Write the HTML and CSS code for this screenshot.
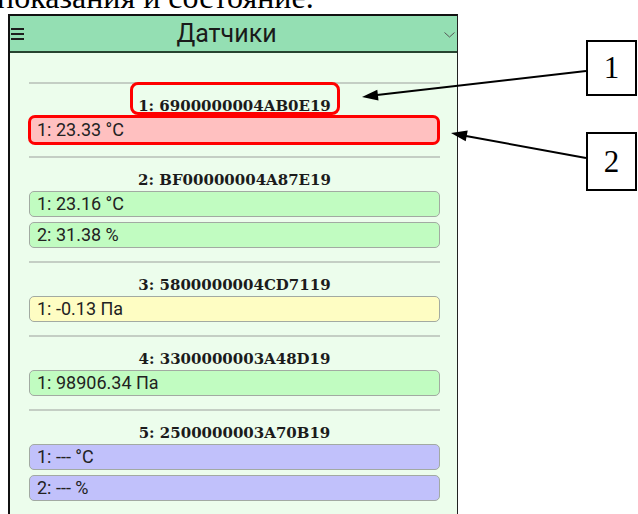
FILE: index.html
```html
<!DOCTYPE html>
<html lang="ru">
<head>
  <meta charset="UTF-8" />
  <title>Датчики</title>
  <link rel="stylesheet" href="styles.css">
</head>
<body>
  <p class="caption">показания и состояние.</p>

  <div class="figure">
    <div class="phone">
      <div class="appbar">
        <span class="menu">
          <svg width="14" height="12" viewBox="0 0 14 12">
            <path d="M0 1H13M0 6H13M0 11H13" stroke="#1e1e1e" stroke-width="2"/>
          </svg>
        </span>
        <span class="appbar-title">Датчики</span>
        <span class="chevron">
          <svg width="11" height="6" viewBox="0 0 11 6">
            <path d="M0.5 0.5L5.5 5L10.5 0.5" fill="none" stroke="#555" stroke-width="1"/>
          </svg>
        </span>
      </div>

      <div class="sensors">
        <section class="sensor">
          <h2 class="sensor-title"><span class="marked marked-title">1: 6900000004AB0E19</span></h2>
          <div class="reading reading-alarm marked marked-row">1: 23.33 °C</div>
        </section>

        <section class="sensor">
          <h2 class="sensor-title">2: BF00000004A87E19</h2>
          <div class="reading reading-ok">1: 23.16 °C</div>
          <div class="reading reading-ok">2: 31.38 %</div>
        </section>

        <section class="sensor">
          <h2 class="sensor-title">3: 5800000004CD7119</h2>
          <div class="reading reading-warn">1: -0.13 Па</div>
        </section>

        <section class="sensor">
          <h2 class="sensor-title">4: 3300000003A48D19</h2>
          <div class="reading reading-ok">1: 98906.34 Па</div>
        </section>

        <section class="sensor">
          <h2 class="sensor-title">5: 2500000003A70B19</h2>
          <div class="reading reading-none">1: --- °C</div>
          <div class="reading reading-none">2: --- %</div>
        </section>
      </div>
    </div>

    <div class="callouts">
      <div class="callout callout-1">1</div>
      <div class="callout callout-2">2</div>
    </div>

    <!-- leader arrows from the callout boxes -->
    <svg class="arrows" width="638" height="200" viewBox="0 0 638 200">
      <line x1="586" y1="57" x2="377" y2="81" stroke="#000" stroke-width="2"/>
      <polygon points="362,83 378.5,86.6 377.3,75.7" fill="#000"/>
      <line x1="586" y1="144" x2="466" y2="122" stroke="#000" stroke-width="2"/>
      <polygon points="451,119 465.7,127.3 467.7,116.5" fill="#000"/>
    </svg>
  </div>
</body>
</html>
```

FILE: styles.css
```css
html {
  overflow: hidden;
}

body {
  font-family: Roboto, "Noto Sans", sans-serif;
  background-color: #fff;
  margin: 0;
  padding: 0;
}

.caption {
  margin: -19px 0 0 -3px;
  font: 32px/32px "Liberation Serif", serif;
  color: #000;
  white-space: nowrap;
}

.figure {
  position: relative;
  display: flex;
  margin-top: 1px;
}

.phone {
  flex-shrink: 0;
  width: 447px;
  margin-left: 8px;
  border-left: 2px solid #111;
  border-top: 2px solid #111;
  border-right: 1px solid #222;
  background-color: #ecfdec;
}

.appbar {
  display: flex;
  align-items: center;
  height: 35px;
  background-color: #94dfb3;
  border-bottom: 2px solid #27432f;
}

.menu {
  display: flex;
  width: 16px;
  padding-left: 1px;
  box-sizing: border-box;
}

.appbar-title {
  flex: 1;
  text-align: center;
  font-size: 25px;
  line-height: 35px;
  color: #1a1a1a;
}

.chevron {
  display: flex;
  width: 30px;
  padding-left: 17px;
  margin-top: 3px;
  box-sizing: border-box;
}

.sensors {
  padding: 29px 17px 40px 19px;
}

.sensor {
  border-top: 2px solid #c4cec4;
  padding: 11px 0 13px;
}

.sensor-title {
  margin: 0;
  font: bold 15px/22px "DejaVu Serif", serif;
  text-align: center;
  color: #1b1b1b;
}

.reading {
  height: 24px;
  border: 1px solid #a2aaa2;
  border-radius: 5px;
  padding-left: 7px;
  font-size: 18px;
  line-height: 24px;
  color: #222;
}

.reading + .reading {
  margin-top: 5px;
}

.reading-alarm { background-color: #ffc0c0; }
.reading-ok { background-color: #c1fcc1; }
.reading-warn { background-color: #fefdc3; }
.reading-none { background-color: #c1c1fb; }

/* red highlight frames drawn on the screenshot */
.marked {
  position: relative;
}

.marked::after {
  content: "";
  position: absolute;
  border: 3px solid #f00;
  border-radius: 8px;
}

.marked-title {
  display: inline-block;
}

.marked-title::after {
  top: -13px;
  bottom: 2px;
  left: -8px;
  right: -9px;
}

.marked-row::after {
  top: -3px;
  bottom: -3px;
  left: -2px;
  right: -1px;
  border-radius: 7px;
}

.callouts {
  display: flex;
  flex-direction: column;
  gap: 36px;
  margin-left: 128px;
  padding-top: 26px;
}

.callout {
  display: flex;
  align-items: center;
  justify-content: center;
  width: 51px;
  height: 56px;
  box-sizing: border-box;
  border: 2px solid #000;
  font: 31px "Liberation Serif", serif;
  color: #000;
}

.callout-2 {
  height: 59px;
}

.arrows {
  position: absolute;
  left: 0;
  top: 0;
  pointer-events: none;
}
```
